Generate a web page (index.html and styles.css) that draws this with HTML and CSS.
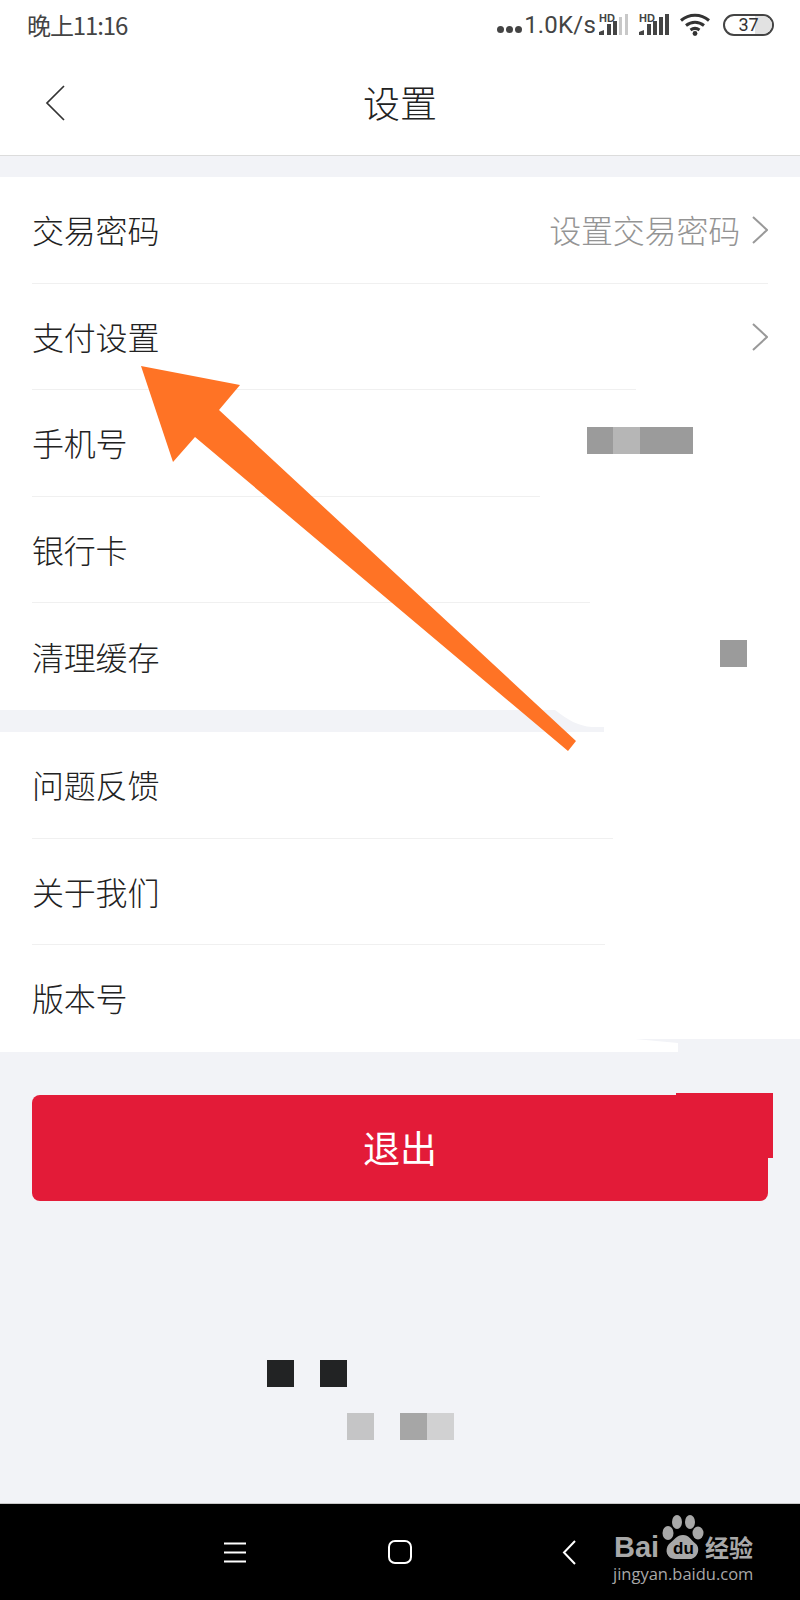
FILE: index.html
```html
<!DOCTYPE html>
<html lang="zh-CN">
<head>
<meta charset="utf-8">
<title>设置</title>
<link rel="stylesheet" href="styles.css">
</head>
<body>
<div class="screen">
  <div class="status">
    <span class="clock">晚上11:16</span>
    <div class="status-right">
      <span class="dots"><i></i><i></i><i></i></span>
      <span class="speed">1.0K/s</span>
      <span class="signal">
        <span class="hd">HD</span>
        <svg width="30" height="21" viewBox="0 0 30 21"><path d="M0 21v-3l5-2v5Z" fill="#444"/><rect x="8" y="10" width="4" height="11" fill="#444"/><rect x="14" y="7" width="4" height="14" fill="#444"/><rect x="20" y="3" width="3" height="18" fill="#c8c8c8"/><rect x="26" y="0" width="3" height="21" fill="#c8c8c8"/></svg>
      </span>
      <span class="signal signal-b">
        <span class="hd">HD</span>
        <svg width="30" height="21" viewBox="0 0 30 21"><path d="M0 21v-3l5-2v5Z" fill="#444"/><rect x="8" y="10" width="4" height="11" fill="#444"/><rect x="14" y="7" width="4" height="14" fill="#444"/><rect x="20" y="3" width="4" height="18" fill="#444"/><rect x="26" y="0" width="4" height="21" fill="#444"/></svg>
      </span>
      <svg class="wifi" width="32" height="23" viewBox="0 0 32 23" fill="none" stroke="#333" stroke-width="3"><path d="M2 7.500C10 0.500 22 0.500 30 7.500"/><path d="M7 12.500c5.500-4.500 12.500-4.500 18 0"/><path d="M11.500 17c3-2.200 6-2.200 9 0"/><circle cx="16" cy="20.500" r="2.400" fill="#333" stroke="none"/></svg>
      <span class="battery"><span class="battery-fill"></span><span class="battery-num">37</span></span>
    </div>
  </div>

  <header class="topbar">
    <svg class="back" width="20" height="36" viewBox="0 0 20 36" fill="none" stroke="#333" stroke-width="1.700"><path d="M19 1 2 18l17 17"/></svg>
    <h1 class="title">设置</h1>
  </header>

  <section class="group group-first">
    <div class="row"><div class="row-in"><span class="label">交易密码</span><span class="value">设置交易密码</span><svg class="chev" width="16" height="28" viewBox="0 0 16 28" fill="none" stroke="#999" stroke-width="2"><path d="M1 1l14 13L1 27"/></svg></div><i class="divider"></i></div>
    <div class="row"><div class="row-in"><span class="label">支付设置</span><svg class="chev" width="16" height="28" viewBox="0 0 16 28" fill="none" stroke="#999" stroke-width="2"><path d="M1 1l14 13L1 27"/></svg></div><i class="divider line-604"></i></div>
    <div class="row"><div class="row-in"><span class="label">手机号</span></div><span class="mosaic-phone"><i class="m-a"></i><i class="m-b"></i><i class="m-c"></i></span><i class="divider line-508"></i></div>
    <div class="row"><div class="row-in"><span class="label">银行卡</span></div><i class="divider line-558"></i></div>
    <div class="row"><div class="row-in"><span class="label">清理缓存</span></div><i class="m-cache"></i></div>
  </section>

  <div class="gap">
    <svg class="gap-shape" width="604" height="22" viewBox="0 0 604 22"><path d="M0 0H555C568 10 578 16 592 17H604V22H0Z" fill="#f2f3f7"/></svg>
  </div>

  <section class="group">
    <div class="row"><div class="row-in"><span class="label">问题反馈</span></div><i class="divider line-581"></i></div>
    <div class="row"><div class="row-in"><span class="label">关于我们</span></div><i class="divider line-573"></i></div>
    <div class="row"><div class="row-in"><span class="label">版本号</span></div></div>
    <svg class="notch" width="165" height="13" viewBox="0 0 165 13"><path d="M0 0H165V13H43V4Z" fill="#f2f3f7"/></svg>
  </section>

  <main class="foot">
    <div class="logout-wrap">
      <button class="logout">退出</button>
      <span class="logout-patch"></span>
    </div>
    <div class="blur blur-top"><i class="m-dark"></i><i class="m-dark"></i></div>
    <div class="blur blur-low"><i class="m-l1"></i><i class="m-l2"></i><i class="m-l3"></i></div>
  </main>

  <nav class="navbar">
    <svg class="nav-menu" width="22" height="21" viewBox="0 0 22 21" fill="none" stroke="#fff" stroke-width="2"><path d="M0 1.500h22M0 10.500h22M0 19.500h22"/></svg>
    <span class="nav-home"></span>
    <svg class="nav-back" width="14" height="25" viewBox="0 0 14 25" fill="none" stroke="#fff" stroke-width="2"><path d="M13 1 2 12.500 13 24"/></svg>
  </nav>

  <svg class="arrow" width="800" height="800" viewBox="0 0 800 800"><path d="M141 366 240 385 219 410 576 741 568 751 195 437 173 462Z" fill="#ff7325"/></svg>

  <div class="mark">
    <span class="mark-bai">Bai</span>
    <svg class="mark-paw" width="42" height="46" viewBox="0 0 42 46" fill="#a8a8a8"><ellipse cx="6" cy="18" rx="5.500" ry="7"/><ellipse cx="15" cy="7" rx="5" ry="7"/><ellipse cx="28" cy="7" rx="5" ry="7"/><ellipse cx="36" cy="18" rx="5.500" ry="6.500"/><path d="M21 20c6 0 8 5 13 9 5 5 1 15-6 15H13c-8 0-11-9-6-15 5-4 8-9 14-9Z"/></svg>
    <span class="mark-du">du</span>
    <span class="mark-jy">经验</span>
    <span class="mark-url">jingyan.baidu.com</span>
  </div>
</div>
</body>
</html>
```
FILE: styles.css
```css
* { box-sizing: border-box; }
html, body { margin: 0; padding: 0; }
body { font-family: "Noto Sans CJK SC", "Noto Sans", sans-serif; }
.screen {
  position: relative;
  width: 800px;
  height: 1600px;
  background: #f2f3f7;
  display: flex;
  flex-direction: column;
  overflow: hidden;
}

/* status bar */
.status {
  height: 55px;
  background: #fff;
  display: flex;
  align-items: center;
  justify-content: space-between;
  padding: 0 26px 6px 27px;
  color: #444;
}
.clock { font-size: 24px; line-height: 30px; letter-spacing: -1.100px; }
.status-right { display: flex; align-items: center; }
.dots { display: flex; gap: 2px; margin-top: 10px; margin-right: 2px; }
.dots i { width: 7px; height: 7px; border-radius: 50%; background: #444; }
.speed { font-family: Roboto, sans-serif; font-size: 24px; line-height: 30px; letter-spacing: 0.200px; }
.signal { position: relative; display: block; width: 30px; height: 21px; margin-left: 3px; }
.signal svg { display: block; }
.signal-b { margin-left: 10px; }
.hd { position: absolute; left: 0; top: -1px; font-family: "Liberation Sans", sans-serif; font-weight: 700; font-size: 11px; line-height: 11px; color: #444; }
.wifi { margin-left: 10px; }
.battery {
  position: relative;
  width: 51px;
  height: 22px;
  margin-left: 12px;
  border: 2.500px solid #444;
  border-radius: 11px;
  display: flex;
  align-items: center;
  justify-content: center;
  overflow: hidden;
}
.battery-fill { position: absolute; left: 30px; right: 0; top: 0; bottom: 0; background: #e2e2e2; }
.battery-num { position: relative; font-family: Roboto, sans-serif; font-size: 18px; line-height: 20px; color: #333; }

/* title bar */
.topbar {
  position: relative;
  height: 101px;
  background: #fff;
  border-bottom: 1px solid #dcdcdc;
  display: flex;
  align-items: center;
  justify-content: center;
  padding-bottom: 6px;
}
.back { position: absolute; left: 45px; top: 30px; }
.title { margin: 0; font-size: 37px; font-weight: 300; line-height: 50px; color: #222; }

/* list */
.group { position: relative; background: #fff; }
.group-first { margin-top: 21px; }
.row { position: relative; height: 106.600px; padding: 0 32px; }
.row-in {
  height: 100%;
  display: flex;
  align-items: center;
  padding-bottom: 2px;
}
.divider { position: absolute; left: 32px; right: 32px; bottom: 0; height: 1px; background: #f0f0f0; }
.label { font-size: 32px; font-weight: 300; line-height: 44px; color: #222; letter-spacing: -0.200px; }
.value { margin-left: auto; font-size: 32px; font-weight: 300; line-height: 44px; color: #949494; letter-spacing: -0.200px; }
.chev { margin-left: 12px; margin-top: 2px; }
.label + .chev { margin-left: auto; }
.divider.line-604 { right: auto; width: 604px; }
.divider.line-508 { right: auto; width: 508px; }
.divider.line-558 { right: auto; width: 558px; }
.divider.line-581 { right: auto; width: 581px; }
.divider.line-573 { right: auto; width: 573px; }

.mosaic-phone { position: absolute; left: 587px; top: 37px; display: flex; height: 27px; }
.mosaic-phone i { display: block; height: 27px; }
.m-a { width: 26px; background: #9b9b9b; }
.m-b { width: 27px; background: #b6b6b6; }
.m-c { width: 53px; background: #9b9b9b; }
.m-cache { position: absolute; left: 720px; top: 37px; width: 27px; height: 27px; background: #9b9b9b; }

.gap { height: 22px; background: #fff; }
.gap-shape { display: block; }
.notch { position: absolute; right: 0; bottom: 0; display: block; }

/* footer area */
.foot { flex: 1; padding: 43px 32px 0; }
.logout-wrap { position: relative; height: 106px; }
.logout {
  display: block;
  width: 100%;
  height: 100%;
  border: 0;
  border-radius: 8px;
  background: #e31b38;
  color: #fff;
  font-family: inherit;
  font-size: 37px;
  font-weight: 400;
  line-height: 50px;
  padding: 0 0 2px;
}
.logout-patch { position: absolute; left: 644px; right: -5px; top: -2px; height: 65px; background: #e31b38; }
.blur { display: flex; height: 27px; }
.blur i { display: block; width: 27px; height: 27px; }
.blur-top { margin-top: 159px; margin-left: 235px; gap: 26px; }
.m-dark { background: #222324; }
.blur-low { margin-top: 26px; margin-left: 315px; }
.m-l1 { background: #c5c5c6; margin-right: 26px; }
.m-l2 { background: #a6a6a6; }
.m-l3 { background: #d1d1d2; }

/* nav */
.navbar {
  position: relative;
  height: 97px;
  background: #000;
  border-top: 1px solid #c8c8c8;
  display: flex;
  align-items: center;
  padding-left: 224px;
}
.nav-menu { display: block; }
.nav-home { display: block; width: 24px; height: 24px; margin-left: 142px; border: 2px solid #fff; border-radius: 7px; }
.nav-back { display: block; margin-left: 150px; }

/* annotation overlay */
.arrow { position: absolute; left: 0; top: 0; pointer-events: none; }

/* watermark */
.mark { position: absolute; left: 0; top: 0; width: 800px; height: 1600px; pointer-events: none; color: #a8a8a8; }
.mark span { position: absolute; white-space: nowrap; }
.mark-bai { left: 614px; top: 1530px; font-family: "Liberation Sans", sans-serif; font-weight: 700; font-size: 29px; line-height: 34px; }
.mark-paw { position: absolute; left: 662px; top: 1515px; }
.mark-du { left: 673px; top: 1539px; font-family: "Liberation Sans", sans-serif; font-weight: 700; font-size: 17px; line-height: 20px; color: #000; }
.mark-jy { left: 705px; top: 1530px; font-size: 24px; line-height: 34px; font-weight: 700; }
.mark-url { left: 613px; top: 1562px; font-family: "Open Sans", sans-serif; font-size: 16.500px; line-height: 24px; }
```
